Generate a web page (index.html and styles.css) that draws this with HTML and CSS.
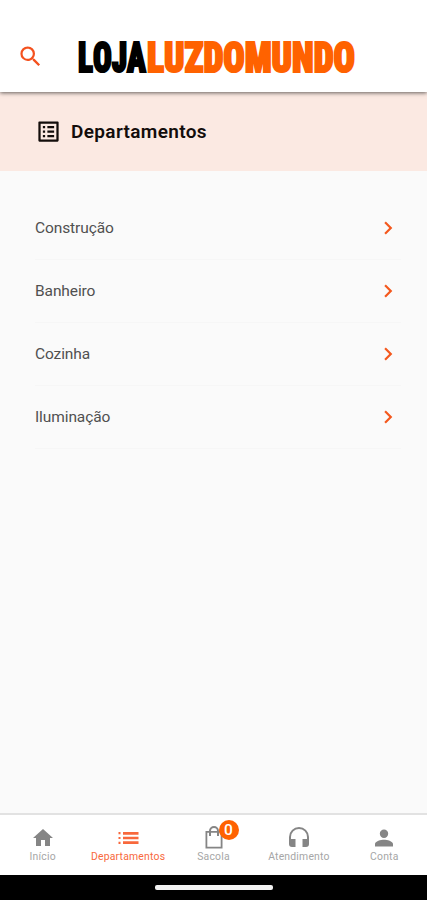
FILE: index.html
```html
<!DOCTYPE html>
<html lang="pt-BR">
<head>
    <meta charset="UTF-8">
    <meta name="viewport" content="width=device-width, initial-scale=1.0">
    <title>Loja Luz do Mundo</title>
    <link rel="stylesheet" href="styles.css">
</head>
<body>
    <div class="app">
        <header class="topbar">
            <svg class="search-icon" viewBox="0 0 24 24"><path d="M15.5 14h-.79l-.28-.27A6.471 6.471 0 0 0 16 9.5 6.5 6.5 0 1 0 9.5 16c1.61 0 3.09-.59 4.23-1.57l.27.28v.79l5 4.99L20.49 19l-4.99-5zm-6 0C7.01 14 5 11.99 5 9.5S7.01 5 9.5 5 14 7.01 14 9.5 11.99 14 9.5 14z"/></svg>
            <svg class="logo" viewBox="0 0 278 34">
                <text class="logo-dark" x="0" y="32" textLength="68" lengthAdjust="spacingAndGlyphs">LOJA</text>
                <text class="logo-orange" x="69" y="32" textLength="208" lengthAdjust="spacingAndGlyphs">LUZDOMUNDO</text>
            </svg>
        </header>

        <div class="page-title">
            <svg viewBox="0 0 24 24"><path d="M19 5v14H5V5h14m1.1-2H3.9c-.5 0-.9.4-.9.9v16.2c0 .4.4.9.9.9h16.2c.4 0 .9-.5.9-.9V3.9c0-.5-.5-.9-.9-.9zM11 7h6v2h-6V7zm0 4h6v2h-6v-2zm0 4h6v2h-6v-2zM7 7h2v2H7V7zm0 4h2v2H7v-2zm0 4h2v2H7v-2z"/></svg>
            <h1>Departamentos</h1>
        </div>

        <ul class="departments">
            <li>
                <span>Construção</span>
                <svg viewBox="0 0 24 24"><path d="M10 6 8.59 7.41 13.17 12l-4.58 4.59L10 18l6-6z"/></svg>
            </li>
            <li>
                <span>Banheiro</span>
                <svg viewBox="0 0 24 24"><path d="M10 6 8.59 7.41 13.17 12l-4.58 4.59L10 18l6-6z"/></svg>
            </li>
            <li>
                <span>Cozinha</span>
                <svg viewBox="0 0 24 24"><path d="M10 6 8.59 7.41 13.17 12l-4.58 4.59L10 18l6-6z"/></svg>
            </li>
            <li>
                <span>Iluminação</span>
                <svg viewBox="0 0 24 24"><path d="M10 6 8.59 7.41 13.17 12l-4.58 4.59L10 18l6-6z"/></svg>
            </li>
        </ul>

        <nav class="bottom-nav">
            <a class="nav-item">
                <svg viewBox="0 0 24 24"><path d="M10 20v-6h4v6h5v-8h3L12 3 2 12h3v8z"/></svg>
                <span>Início</span>
            </a>
            <a class="nav-item active">
                <svg viewBox="0 0 24 24"><path d="M2.500 6h2v2.200h-2zM2.500 10.900h2v2.200h-2zM2.500 15.800h2V18h-2zM7 6h15.500v2.700H7zM7 10.650h15.500v2.700H7zM7 15.300h15.500V18H7z"/></svg>
                <span>Departamentos</span>
            </a>
            <a class="nav-item">
                <div class="bag">
                    <svg viewBox="0 0 24 24"><path d="M20.500 5H17A5 5 0 0 0 7 5H3.500v17.500h17zM12 2a3 3 0 0 1 3 3H9a3 3 0 0 1 3-3zm6.700 18.700H5.300V6.800H7V10h2V6.800h6V10h2V6.800h1.700z"/></svg>
                    <span class="badge">0</span>
                </div>
                <span>Sacola</span>
            </a>
            <a class="nav-item">
                <svg viewBox="0 0 24 24"><path d="M12 1a10 10 0 0 0-10 10v7a3 3 0 0 0 3 3h3.500v-8H4v-2a8 8 0 0 1 16 0v2h-4.500v8H19a3 3 0 0 0 3-3v-7A10 10 0 0 0 12 1z"/></svg>
                <span>Atendimento</span>
            </a>
            <a class="nav-item">
                <svg viewBox="0 0 24 24"><path d="M12 12a4.200 4.200 0 1 0 0-8.400 4.200 4.200 0 0 0 0 8.400zm0 1.700c-3 0-9 1.500-9 4.300v2.500h18V18c0-2.800-6-4.300-9-4.300z"/></svg>
                <span>Conta</span>
            </a>
        </nav>

        <div class="system-bar">
            <div class="home-handle"></div>
        </div>
    </div>
</body>
</html>
```

FILE: styles.css
```css
* {
    box-sizing: border-box;
    margin: 0;
    padding: 0;
}

body {
    font-family: Roboto, sans-serif;
    background: #fafafa;
}

svg {
    display: block;
    flex-shrink: 0;
    fill: currentColor;
}

.app {
    display: flex;
    flex-direction: column;
    height: 900px;
    overflow: hidden;
}

/* Header */
.topbar {
    display: flex;
    align-items: center;
    height: 92px;
    padding: 22px 17px 0;
    background: #fff;
    box-shadow: 0 1px 4px rgba(0, 0, 0, 0.6);
    position: relative;
}

.search-icon {
    width: 27px;
    height: 27px;
    margin-bottom: 1px;
    color: #f4511e;
}

.logo {
    width: 278px;
    height: 34px;
    margin-left: 34px;
    overflow: visible;
    font-family: Roboto, sans-serif;
    font-size: 42px;
    font-weight: 900;
    font-stretch: 75%;
    font-kerning: none;
    stroke-width: 2.2px;
}

.logo-dark {
    fill: #000;
    stroke: #000;
}

.logo-orange {
    fill: #ff6200;
    stroke: #ff6200;
}

.page-title {
    display: flex;
    align-items: center;
    gap: 9px;
    height: 79px;
    padding-left: 35px;
    background: #fbe9e2;
    color: #130d0b;
}

.page-title svg {
    width: 27px;
    height: 27px;
}

.page-title h1 {
    font-size: 19px;
    font-weight: 600;
    letter-spacing: 0.35px;
}

/* Departments */
.departments {
    flex: 1;
    list-style: none;
    padding: 26px 26px 0 35px;
}

.departments li {
    display: flex;
    align-items: center;
    justify-content: space-between;
    height: 63px;
    border-bottom: 1px solid #f6f6f6;
    font-size: 15.5px;
    letter-spacing: -0.1px;
    color: #505050;
}

.departments svg {
    width: 26px;
    height: 26px;
    color: #f4581d;
}

/* Bottom navigation */
.bottom-nav {
    display: flex;
    height: 62px;
    padding-top: 11px;
    background: #fff;
    border-top: 2px solid #e2e2e2;
}

.nav-item {
    flex: 1;
    display: flex;
    flex-direction: column;
    align-items: center;
    gap: 1px;
    color: #858585;
    font-size: 10.4px;
    line-height: 12px;
    letter-spacing: 0.2px;
}

.nav-item > span {
    color: #a6a6a6;
}

.nav-item svg {
    width: 24px;
    height: 24px;
}

.nav-item.active,
.nav-item.active > span {
    color: #f8683c;
}

.bag {
    position: relative;
}

.badge {
    position: absolute;
    top: -6px;
    left: 17px;
    width: 20px;
    height: 20px;
    border-radius: 50%;
    background: #ff6200;
    color: #fff;
    font-size: 15.5px;
    font-weight: 500;
    line-height: 20px;
    text-align: center;
    letter-spacing: 0;
}

.system-bar {
    display: flex;
    justify-content: center;
    height: 25px;
    padding-top: 10px;
    background: #000;
}

.home-handle {
    width: 118px;
    height: 5px;
    border-radius: 2px;
    background: #f2f2f2;
}
```
